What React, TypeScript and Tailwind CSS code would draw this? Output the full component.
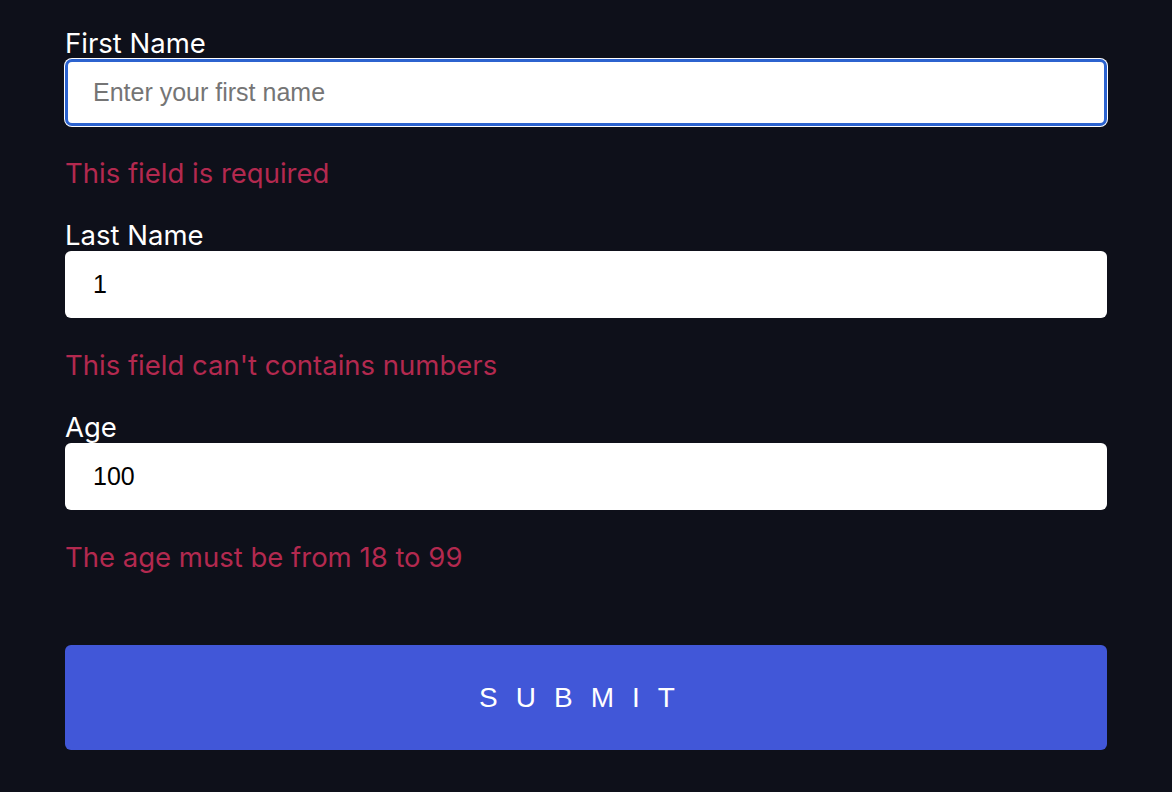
import { useState } from 'react';

const labelCls = "block text-[27.5px] leading-[32px] text-white";
const errorCls = "mt-[31px] mb-[30px] text-[27.5px] leading-[32px] text-[#b3294f]";
const baseInput =
  "w-full h-[67px] bg-white text-[25px] text-black placeholder:text-[#757575] outline-none";
const inputCls = baseInput + " rounded-[6px] px-[28px]";
const focusedInputCls =
  baseInput + " rounded-[7px] border-[3px] border-[#2c63cf] px-[25px] shadow-[0_0_0_1px_#ffffff]";

export default function App() {
  const [firstName, setFirstName] = useState('');
  const [lastName, setLastName] = useState('1');
  const [age, setAge] = useState('100');

  return (
    <div className="min-h-[792px] w-full bg-[#0e101a] px-[65px] pt-[27px]" style={{ fontFamily: 'Inter, "Noto Sans", sans-serif' }}>
      <form onSubmit={(e) => e.preventDefault()} className="flex flex-col">
        <div>
          <label className={labelCls}>First Name</label>
          <input
            type="text"
            value={firstName}
            onChange={(e) => setFirstName(e.target.value)}
            placeholder="Enter your first name"
            className={focusedInputCls}
            style={{ fontFamily: '"Liberation Sans", Arial, sans-serif' }}
          />
          <p className={errorCls}>This field is required</p>
        </div>

        <div>
          <label className={labelCls}>Last Name</label>
          <input
            type="text"
            value={lastName}
            onChange={(e) => setLastName(e.target.value)}
            className={inputCls}
            style={{ fontFamily: '"Liberation Sans", Arial, sans-serif' }}
          />
          <p className={errorCls}>This field can't contains numbers</p>
        </div>

        <div>
          <label className={labelCls}>Age</label>
          <input
            type="text"
            value={age}
            onChange={(e) => setAge(e.target.value)}
            className={inputCls}
            style={{ fontFamily: '"Liberation Sans", Arial, sans-serif' }}
          />
          <p className="mt-[31px] text-[27.5px] leading-[32px] text-[#b3294f]">The age must be from 18 to 99</p>
        </div>

        <button
          type="submit"
          className="mt-[72px] h-[105px] w-full rounded-[6px] bg-[#4157d8] text-[28px] uppercase tracking-[18px] text-white"
          style={{ fontFamily: '"Liberation Sans", Arial, sans-serif' }}
        >
          Submit
        </button>
      </form>
    </div>
  );
}
